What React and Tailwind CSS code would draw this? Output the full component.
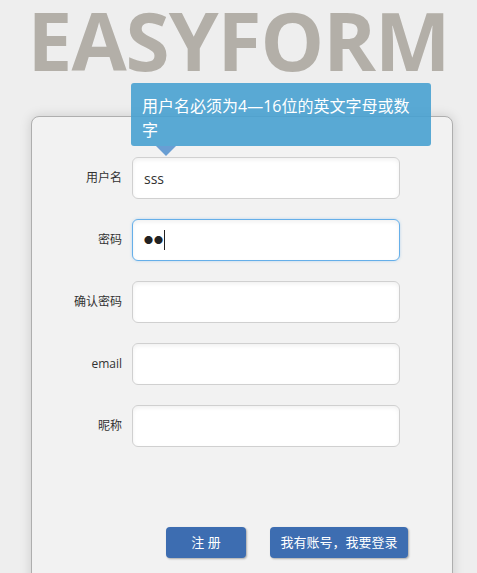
import React from 'react';

const Field = ({ label, children }) => (
  <div className="flex items-center">
    <label className="w-[90px] text-right text-[12px] text-[#333] shrink-0">{label}</label>
    <div className="ml-[10px]">{children}</div>
  </div>
);

const inputCls =
  'block w-[268px] h-[42px] rounded-[6px] border border-[#d0d0d0] bg-white px-[11px] text-[14px] text-[#333] outline-none shadow-[inset_0_2px_4px_rgba(0,0,0,0.06)]';

const App = () => {
  return (
    <div
      className="min-h-screen bg-[#eeeeee] overflow-hidden"
      style={{ fontFamily: '"Open Sans", "Noto Sans CJK SC", sans-serif' }}
    >
      <h1 className="pt-[8px] text-center text-[80px] font-bold leading-[64px] text-[#b3afa8] tracking-[-1px]">
        EASYFORM
      </h1>

      {/* Form card */}
      <div className="relative ml-[31px] mt-[44px] w-[422px] rounded-[8px] border border-[#aeaeae] bg-[#f2f2f2] shadow-[0_0_12px_rgba(0,0,0,0.15)] pt-[40px] pb-[60px]">
        {/* Tooltip */}
        <div className="absolute left-[99px] top-[-34px] w-[300px] rounded-[3px] bg-[rgba(72,161,208,0.9)] pt-[11px] pb-[4px] px-[11px] text-[16px] leading-[24px] text-white whitespace-nowrap">
          用户名必须为4—16位的英文字母或数
          <br />
          字
          <div className="absolute left-[25px] top-full w-0 h-0 border-l-[10px] border-r-[10px] border-t-[10px] border-l-transparent border-r-transparent border-t-[#699ed3]" />
        </div>

        <div className="flex flex-col gap-[20px]">
          <Field label="用户名">
            <input className={inputCls} defaultValue="sss" readOnly />
          </Field>
          <Field label="密码">
            <div className="flex items-center w-[268px] h-[42px] rounded-[6px] border border-[#66afe9] bg-white px-[11px] shadow-[inset_0_2px_4px_rgba(0,0,0,0.06),0_0_3px_rgba(102,175,233,0.4)]">
              <span className="text-[9px] text-[#222] tracking-[1px]">●●</span>
              <span className="w-px h-[20px] bg-[#222]" />
            </div>
          </Field>
          <Field label="确认密码">
            <input className={inputCls} type="password" readOnly />
          </Field>
          <Field label="email">
            <input className={inputCls} readOnly />
          </Field>
          <Field label="昵称">
            <input className={inputCls} readOnly />
          </Field>
        </div>

        <div className="flex gap-[24px] pl-[134px] mt-[80px]">
          <button className="w-[80px] h-[31px] rounded-[4px] bg-[#3d6db1] text-white text-[13px] shadow-[1px_1px_2px_rgba(0,0,0,0.3)]">
            注 册
          </button>
          <button className="w-[138px] h-[31px] rounded-[4px] bg-[#3d6db1] text-white text-[13px] shadow-[1px_1px_2px_rgba(0,0,0,0.3)]">
            我有账号，我要登录
          </button>
        </div>
      </div>
    </div>
  );
};

export default App;
